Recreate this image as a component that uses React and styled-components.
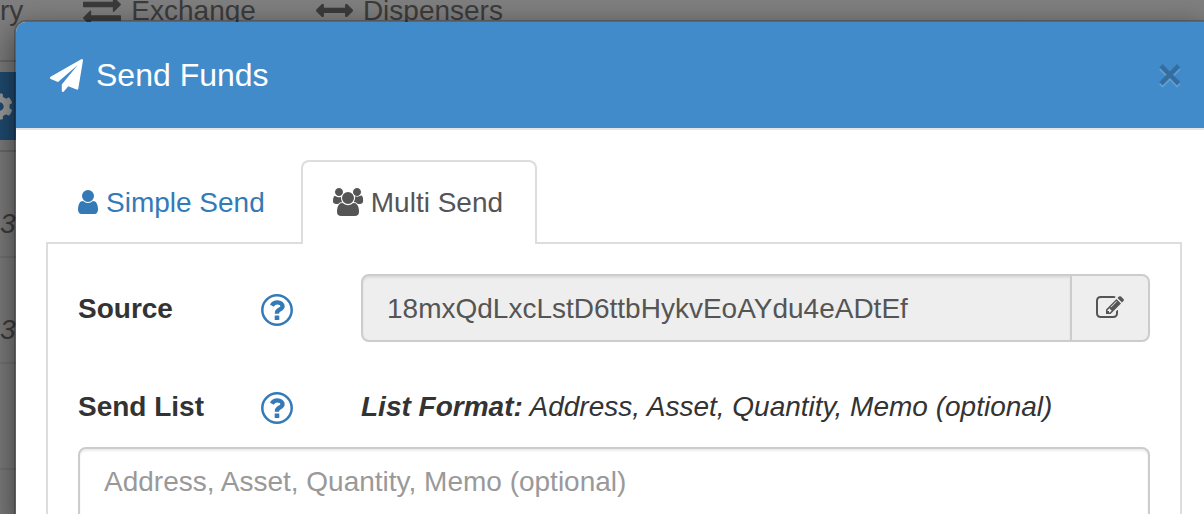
import React, { useState } from 'react';
import styled, { createGlobalStyle } from 'styled-components';
import { FaCog } from 'react-icons/fa';

const GlobalStyle = createGlobalStyle`
	* {
		box-sizing: border-box;
	}

	html, body, #root {
		height: 100%;
	}

	body {
		margin: 0;
		overflow: hidden;
		background: #7a7a7a;
		color: #333;
		font-family: 'Liberation Sans', Arial, sans-serif;
		font-size: 28px;
		line-height: 40px;
	}
`;

const Page = styled.div`
	position: relative;
	height: 100%;
	overflow: hidden;
`;

const NavBar = styled.nav`
	display: flex;
	gap: 60px;
	height: 62px;
	border-bottom: 2px solid #686868;
	background: linear-gradient(#7f7f7f, #7a7a7a);
`;

const NavLink = styled.a`
	display: flex;
	align-items: center;
	gap: 10px;
	height: 22px;
	color: #3b3b3b;
	text-decoration: none;
`;

const Toolbar = styled.div`
	display: flex;
	align-items: center;
	height: 68px;
	margin-top: 10px;
	background: #1f4a70;
	color: #999;
`;

const ToolbarIcon = styled.span`
	display: flex;
	margin-left: -14px;
`;

const List = styled.ul`
	margin: 10px 0 0;
	padding: 0;
	list-style: none;
	border-top: 2px solid #686868;
	font-style: italic;
	color: #3b3b3b;
`;

const ListItem = styled.li`
	height: 106px;
	padding-top: 52px;
	border-bottom: 2px solid #717171;
`;

const Modal = styled.section`
	position: absolute;
	top: 20px;
	left: 14px;
	right: -2px;
	bottom: -12px;
	overflow: hidden;
	background: #fff;
	background-clip: padding-box;
	border: 2px solid rgba(0, 0, 0, 0.2);
	border-radius: 12px;
	border-top-right-radius: 0;
	box-shadow: 0 10px 30px rgba(0, 0, 0, 0.5);
`;

const ModalHeader = styled.header`
	display: flex;
	align-items: center;
	justify-content: space-between;
	height: 108px;
	padding: 0 22px 0 34px;
	background: #428bca;
	border-bottom: 2px solid #e5e5e5;
	color: #fff;
`;

const Title = styled.h1`
	display: flex;
	align-items: center;
	gap: 13px;
	margin: 0;
	font-size: 32px;
	font-weight: 400;
`;

const CloseButton = styled.button`
	padding: 0;
	border: none;
	background: none;
	color: #000;
	font: bold 42px 'Liberation Sans', Arial, sans-serif;
	line-height: 42px;
	text-shadow: 0 2px 0 #fff;
	opacity: 0.2;
	cursor: pointer;
`;

const ModalBody = styled.div`
	padding: 30px 22px 0 30px;
`;

const Tabs = styled.div`
	display: flex;
	gap: 2px;
	margin-bottom: -2px;
`;

const Tab = styled.button`
	display: flex;
	align-items: center;
	gap: 8px;
	height: 84px;
	padding: 0 32px 0 30px;
	border: 2px solid ${({ $active }) => ($active ? '#ddd' : 'transparent')};
	border-bottom: none;
	border-radius: 8px 8px 0 0;
	background: ${({ $active }) => ($active ? '#fff' : 'transparent')};
	color: ${({ $active }) => ($active ? '#555' : '#337ab7')};
	font: inherit;
	z-index: ${({ $active }) => ($active ? 1 : 0)};
	cursor: pointer;
`;

const Panel = styled.div`
	height: 400px;
	padding: 30px;
	border: 2px solid #ddd;
`;

const Row = styled.div`
	display: grid;
	grid-template-columns: 183px 100px 1fr;
	align-items: center;
	min-height: 68px;
	margin-bottom: ${({ $tight }) => ($tight ? '7px' : '30px')};
`;

const Label = styled.label`
	padding-top: 2px;
	font-weight: bold;
`;

const HelpButton = styled.button`
	display: flex;
	width: 32px;
	padding: 3px 0 0;
	border: none;
	background: none;
	color: #337ab7;
	cursor: pointer;
`;

const InputGroup = styled.div`
	display: flex;
	height: 68px;
`;

const SourceInput = styled.input`
	flex: 1;
	min-width: 0;
	padding: 14px 24px 12px;
	border: 2px solid #ccc;
	border-radius: 8px 0 0 8px;
	background: #eee;
	box-shadow: inset 0 2px 2px rgba(0, 0, 0, 0.075);
	color: #555;
	font: inherit;
	outline: none;
`;

const Addon = styled.button`
	display: flex;
	align-items: center;
	justify-content: center;
	width: 78px;
	padding: 0;
	border: 2px solid #ccc;
	border-left: none;
	border-radius: 0 8px 8px 0;
	background: #eee;
	color: #555;
	cursor: pointer;
`;

const Hint = styled.em`
	padding-top: 2px;
	white-space: nowrap;
`;

const SendList = styled.textarea`
	display: block;
	width: 100%;
	height: 200px;
	padding: 13px 24px;
	border: 2px solid #ccc;
	border-radius: 8px;
	box-shadow: inset 0 2px 2px rgba(0, 0, 0, 0.075);
	color: #555;
	font: inherit;
	resize: none;
	outline: none;

	&::placeholder {
		color: #999;
		opacity: 1;
	}
`;

const Svg = styled.svg`
	display: block;
	flex: none;
	overflow: visible;
	fill: currentColor;
`;

const ExchangeIcon = () => (
	<Svg width="38" height="38" viewBox="0 50 1792 1792">
		<path d="M1792 1184v192q0 13-9.5 22.5t-22.5 9.5h-1376v192q0 13-9.5 22.5t-22.5 9.5q-12 0-24-10l-319-320q-9-9-9-22 0-14 9-23l320-320q9-9 23-9 13 0 22.5 9.5t9.5 22.5v192h1376q13 0 22.5 9.5t9.5 22.5zm0-544q0 14-9 23l-320 320q-9 9-23 9-13 0-22.5-9.5t-9.5-22.5v-192h-1376q-13 0-22.5-9.5t-9.5-22.5v-192q0-13 9.5-22.5t22.5-9.5h1376v-192q0-13 9.5-22.5t22.5-9.5q12 0 24 10l319 319q9 9 9 23z" />
	</Svg>
);

const ArrowsIcon = () => (
	<Svg width="37" height="37" viewBox="0 50 1792 1792">
		<path d="M1792 896q0 26-19 45l-256 256q-19 19-45 19t-45-19-19-45v-128h-1024v128q0 26-19 45t-45 19-45-19l-256-256q-19-19-19-45t19-45l256-256q19-19 45-19t45 19 19 45v128h1024v-128q0-26 19-45t45-19 45 19l256 256q19 19 19 45z" />
	</Svg>
);

const PlaneIcon = () => (
	<Svg width="33" height="33" viewBox="0 0 1792 1792">
		<path d="M1764 11q33 24 27 64l-256 1536q-5 29-32 45-14 8-31 8-11 0-24-5l-453-185-242 295q-18 23-49 23-13 0-22-4-19-7-30.5-23.5t-11.5-36.5v-349l864-1059-1069 925-395-162q-37-14-40-55-2-40 32-59l1664-960q15-9 32-9 20 0 36 11z" />
	</Svg>
);

const UserIcon = () => (
	<Svg width="20" height="28" viewBox="256 64 1280 1792">
		<path d="M1536 1399q0 109-62.5 187t-150.5 78h-854q-88 0-150.5-78t-62.5-187q0-85 8.5-160.5t31.5-152 58.5-131 94-89 134.5-34.5q131 128 313 128t313-128q76 0 134.5 34.5t94 89 58.5 131 31.5 152 8.5 160.5zm-256-887q0 159-112.5 271.5t-271.5 112.5-271.5-112.5-112.5-271.5 112.5-271.5 271.5-112.5 271.5 112.5 112.5 271.5z" />
	</Svg>
);

const UsersIcon = () => (
	<Svg width="30" height="28" viewBox="64 64 1920 1792">
		<path d="M657 896q-162 5-265 128h-134q-82 0-138-40.5t-56-118.5q0-353 124-353 6 0 43.5 21t97.5 42.5 119 21.5q67 0 133-23-5 37-5 66 0 159 90 296zm1071 637q0 120-73 189.5t-194 69.5h-874q-121 0-194-69.5t-73-189.5q0-53 3.5-103.5t14-109 26.5-108.5 43-97.5 62-81 85.5-53.5 111.5-20q10 0 43 21.5t73 48 107 48 135 21.5 135-21.5 107-48 73-48 43-21.5q61 0 111.5 20t85.5 53.5 62 81 43 97.5 26.5 108.5 14 109 3.5 103.5zm-1024-1277q0 106-75 181t-181 75-181-75-75-181 75-181 181-75 181 75 75 181zm704 384q0 159-112.5 271.5t-271.5 112.5-271.5-112.5-112.5-271.5 112.5-271.5 271.5-112.5 271.5 112.5 112.5 271.5zm576 225q0 78-56 118.5t-138 40.5h-134q-103-123-265-128 90-137 90-296 0-29-5-66 66 23 133 23 59 0 119-21.5t97.5-42.5 43.5-21q124 0 124 353zm-128-609q0 106-75 181t-181 75-181-75-75-181 75-181 181-75 181 75 75 181z" />
	</Svg>
);

const EditIcon = () => (
	<Svg width="28" height="28" viewBox="0 0 1792 1792">
		<path d="M888 1184l116-116-152-152-116 116v56h96v96h56zm440-720q-16-16-33 1l-350 350q-17 17-1 33t33-1l350-350q17-17 1-33zm80 594v190q0 119-84.5 203.5t-203.5 84.5h-832q-119 0-203.5-84.5t-84.5-203.5v-832q0-119 84.5-203.5t203.5-84.5h832q63 0 117 25 15 7 18 23 3 17-9 29l-49 49q-14 14-32 8-23-6-45-6h-832q-66 0-113 47t-47 113v832q0 66 47 113t113 47h832q66 0 113-47t47-113v-126q0-13 9-22l64-64q15-15 35-7t20 29zm-96-738l288 288-672 672h-288v-288zm444 132l-92 92-288-288 92-92q28-28 68-28t68 28l152 152q28 28 28 68t-28 68z" />
	</Svg>
);

const HelpIcon = () => (
	<Svg width="32" height="32" viewBox="0 0 32 32">
		<circle cx="16" cy="16" r="14.7" fill="none" stroke="currentColor" strokeWidth="2.5" />
		<path d="M10.8 11.6C12.2 9.4 14 8.4 16.4 8.4C19.2 8.4 21.5 10 21.5 12.4C21.5 15.4 16 15.6 16 18.8V19.8" fill="none" stroke="currentColor" strokeWidth="4.4" />
		<rect x="13.7" y="21.6" width="4.6" height="4.4" rx="0.5" />
	</Svg>
);

function App() {
	const [tab, setTab] = useState('multi');

	return (
		<Page>
			<GlobalStyle />
			<NavBar>
				<NavLink href="#">ry</NavLink>
				<NavLink href="#">
					<ExchangeIcon />
					Exchange
				</NavLink>
				<NavLink href="#">
					<ArrowsIcon />
					Dispensers
				</NavLink>
			</NavBar>
			<Toolbar>
				<ToolbarIcon>
					<FaCog size={27} />
				</ToolbarIcon>
			</Toolbar>
			<List>
				<ListItem>3</ListItem>
				<ListItem>3</ListItem>
				<ListItem />
			</List>
			<Modal role="dialog" aria-labelledby="title">
				<ModalHeader>
					<Title id="title">
						<PlaneIcon />
						Send Funds
					</Title>
					<CloseButton aria-label="Close">×</CloseButton>
				</ModalHeader>
				<ModalBody>
					<Tabs role="tablist">
						<Tab role="tab" $active={tab === 'simple'} onClick={() => setTab('simple')}>
							<UserIcon />
							Simple Send
						</Tab>
						<Tab role="tab" $active={tab === 'multi'} onClick={() => setTab('multi')}>
							<UsersIcon />
							Multi Send
						</Tab>
					</Tabs>
					<Panel>
						<Row>
							<Label htmlFor="source">Source</Label>
							<HelpButton aria-label="About source">
								<HelpIcon />
							</HelpButton>
							<InputGroup>
								<SourceInput id="source" readOnly value="18mxQdLxcLstD6ttbHykvEoAYdu4eADtEf" />
								<Addon aria-label="Change source">
									<EditIcon />
								</Addon>
							</InputGroup>
						</Row>
						<Row $tight>
							<Label htmlFor="send-list">Send List</Label>
							<HelpButton aria-label="About send list">
								<HelpIcon />
							</HelpButton>
							<Hint>
								<strong>List Format:</strong> Address, Asset, Quantity, Memo (optional)
							</Hint>
						</Row>
						<SendList id="send-list" placeholder="Address, Asset, Quantity, Memo (optional)" />
					</Panel>
				</ModalBody>
			</Modal>
		</Page>
	);
}

export default App;
